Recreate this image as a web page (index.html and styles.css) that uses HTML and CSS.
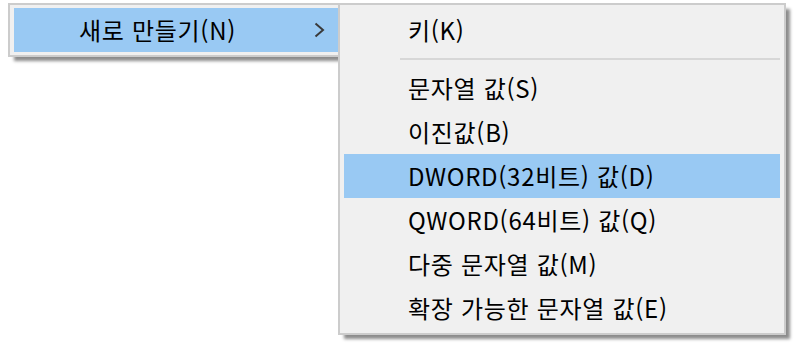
FILE: index.html
```html
<!DOCTYPE html>
<html lang="ko">
<head>
<meta charset="utf-8">
<link rel="stylesheet" href="styles.css">
</head>
<body>
<div class="menu main-menu">
  <div class="item active has-sub">
    <span class="label">새로 만들기(N)</span>
    <svg class="chev" width="11" height="16" viewBox="0 0 11 16"><path d="M1.5 1.5 L9 8 L1.5 14.5" fill="none" stroke="#3a3a3a" stroke-width="2"/></svg>
  </div>
</div>
<div class="menu sub-menu">
  <div class="item"><span class="label">키(K)</span></div>
  <div class="sep"></div>
  <div class="item"><span class="label">문자열 값(S)</span></div>
  <div class="item"><span class="label">이진값(B)</span></div>
  <div class="item active"><span class="label">DWORD(32비트) 값(D)</span></div>
  <div class="item"><span class="label">QWORD(64비트) 값(Q)</span></div>
  <div class="item"><span class="label">다중 문자열 값(M)</span></div>
  <div class="item"><span class="label">확장 가능한 문자열 값(E)</span></div>
</div>
</body>
</html>
```
FILE: styles.css
```css
html, body {
  margin: 0;
  padding: 0;
  background: #ffffff;
}
body {
  width: 800px;
  height: 346px;
  position: relative;
  overflow: hidden;
  font-family: "Noto Sans CJK KR", "Noto Sans", sans-serif;
  font-size: 24px;
  color: #000;
}
.menu {
  position: absolute;
  box-sizing: border-box;
  background: #f0f0f0;
  border: 2px solid #cccccc;
  padding: 3px 4px;
  box-shadow: 5px 5px 3px -1px rgba(0,0,0,0.45);
}
.main-menu {
  left: 8px;
  top: 3px;
  width: 338px;
  height: 54px;
}
.sub-menu {
  left: 338px;
  top: 3px;
  width: 448px;
  height: 332px;
  display: flex;
  flex-direction: column;
}
.item {
  height: 44px;
  display: flex;
  align-items: center;
  padding-left: 64px;
  box-sizing: border-box;
  white-space: nowrap;
}
.main-menu .item {
  padding-left: 65px;
  padding-right: 15px;
}
.item.active {
  background: #99c9f3;
}
.label {
  line-height: 44px;
  letter-spacing: 0.7px;
}
.chev {
  margin-left: auto;
}
.sep {
  height: 14px;
  display: flex;
  align-items: center;
  padding-left: 56px;
}
.sep::before {
  content: "";
  display: block;
  flex: 1;
  height: 2px;
  background: #d7d7d7;
}
```
